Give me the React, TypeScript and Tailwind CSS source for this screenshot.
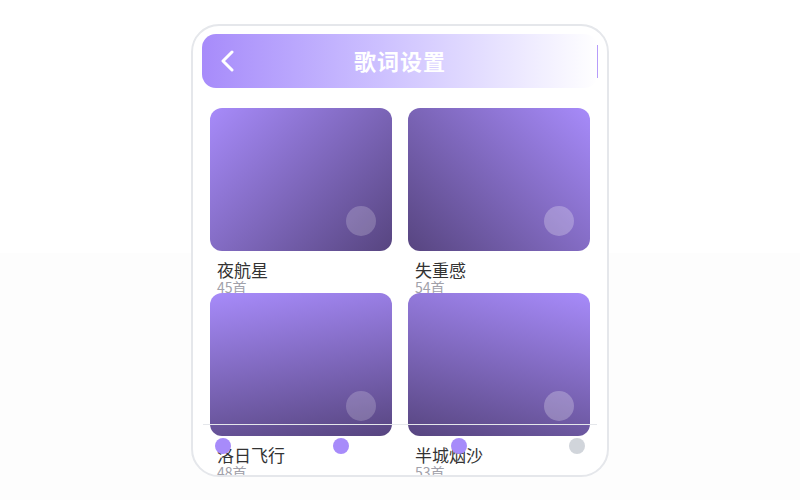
import React from "react";

const cards = [
  { name: "夜航星", count: "45首", grad: "bg-linear-[135deg] from-[#a78bfa] to-[#574580]", circle: "bg-white/20" },
  { name: "失重感", count: "54首", grad: "bg-linear-[225deg] from-[#a78bfa] to-[#574580]", circle: "bg-white/25" },
  { name: "洛日飞行", count: "48首", grad: "bg-linear-[170deg] from-[#a78bfa] to-[#574580]", circle: "bg-white/20" },
  { name: "半城烟沙", count: "53首", grad: "bg-linear-[195deg] from-[#a78bfa] to-[#574580]", circle: "bg-white/25" },
];

export default function App() {
  return (
    <div
      className="w-[800px] h-[500px] bg-[linear-gradient(to_bottom,#ffffff_253px,#fdfdfd_253px)] pt-[24px]"
      style={{ fontFamily: '"Noto Sans CJK SC", "Noto Sans", sans-serif' }}
    >
      <div className="relative mx-auto w-[418px] h-[453px] rounded-[28px] border-2 border-[#e5e7eb] bg-white overflow-hidden pt-[8px] pl-[9px] pr-[9px]">
        <div className="relative h-[54px] rounded-[14px] bg-linear-to-r from-[#a78bfa] to-[#ffffff] flex items-center justify-center">
          <div className="absolute right-0 top-[11px] bottom-[10px] w-px bg-[#b69cfa]" />
          <svg className="absolute left-[17px] top-[16px]" width="16" height="22" viewBox="0 0 16 22">
            <path d="M13 2 L4 11 L13 20" fill="none" stroke="white" strokeWidth="3" strokeLinecap="round" strokeLinejoin="round" />
          </svg>
          <span className="text-white text-[22px] leading-[28px] font-bold tracking-[1px] -mt-[2px]">歌词设置</span>
        </div>
        <div className="mt-[20px] px-[8px] grid grid-cols-2 gap-x-[16px]">
          {cards.map((c) => (
            <div key={c.name} className="h-[185px] flex flex-col">
              <div className={`relative h-[143px] shrink-0 rounded-[12px] ${c.grad}`}>
                <div className={`absolute right-[16px] bottom-[15px] w-[30px] h-[30px] rounded-full ${c.circle}`} />
              </div>
              <div className="mt-[9px] pl-[7px] text-[17px] leading-[20px] text-[#333333]">{c.name}</div>
              <div className="pl-[7px] text-[14px] leading-[14px] text-[#a1a1aa]">{c.count}</div>
            </div>
          ))}
        </div>
        <div className="absolute left-[10px] right-[10px] top-[398px] border-t border-[#e5e7eb]">
          <div className="flex justify-between px-[12px] pt-[13px]">
            <div className="w-4 h-4 rounded-full bg-[#a78bfa]" />
            <div className="w-4 h-4 rounded-full bg-[#a78bfa]" />
            <div className="w-4 h-4 rounded-full bg-[#a78bfa]" />
            <div className="w-4 h-4 rounded-full bg-[#d1d5db]" />
          </div>
        </div>
      </div>
    </div>
  );
}
